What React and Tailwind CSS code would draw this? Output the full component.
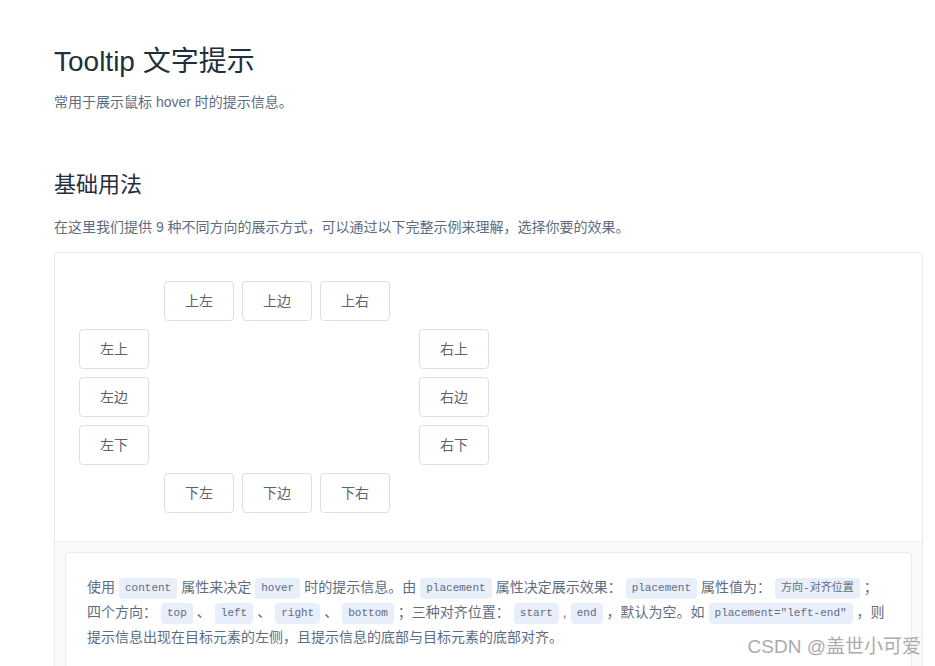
import React from 'react';

const FONT = { fontFamily: '"Liberation Sans", "Noto Sans CJK SC", sans-serif' };

const Btn = ({ children }) => (
  <button className="w-[70px] h-[40px] border border-[#dcdfe6] rounded-[4px] bg-white text-[14px] leading-none text-[#606266]">
    {children}
  </button>
);

const Code = ({ children }) => (
  <code
    className="inline-block mx-[4px] px-[6px] h-[21px] leading-[21px] align-middle rounded-[4px] bg-[#e8eefa] text-[11px] text-[#5e6d82]"
    style={{ fontFamily: '"Liberation Mono", "Noto Sans CJK SC", monospace' }}
  >
    {children}
  </code>
);

const App = () => {
  return (
    <div className="relative min-h-[666px] bg-white pl-[54px] pr-[12px] pt-[42px]" style={FONT}>
      <h2 className="text-[28px] leading-[40px] font-normal text-[#1f2f3d]">Tooltip 文字提示</h2>
      <p className="mt-[10px] text-[14px] leading-[21px] text-[#5e6d82]">常用于展示鼠标 hover 时的提示信息。</p>

      <h3 className="mt-[57px] text-[22px] leading-[30px] font-normal text-[#1f2f3d]">基础用法</h3>
      <p className="mt-[17px] text-[14px] leading-[21px] text-[#5e6d82]">
        在这里我们提供 9 种不同方向的展示方式，可以通过以下完整示例来理解，选择你要的效果。
      </p>

      <div className="mt-[14px] border border-[#ebebeb] rounded-[4px]">
        {/* demo */}
        <div className="pt-[28px] pb-[28px] pl-[24px] flex flex-col gap-[8px]">
          <div className="flex gap-[8px] ml-[85px]">
            <Btn>上左</Btn>
            <Btn>上边</Btn>
            <Btn>上右</Btn>
          </div>
          <div className="flex justify-between w-[410px]">
            <Btn>左上</Btn>
            <Btn>右上</Btn>
          </div>
          <div className="flex justify-between w-[410px]">
            <Btn>左边</Btn>
            <Btn>右边</Btn>
          </div>
          <div className="flex justify-between w-[410px]">
            <Btn>左下</Btn>
            <Btn>右下</Btn>
          </div>
          <div className="flex gap-[8px] ml-[85px]">
            <Btn>下左</Btn>
            <Btn>下边</Btn>
            <Btn>下右</Btn>
          </div>
        </div>

        {/* description */}
        <div className="border-t border-[#eaeefb] bg-[#fafafa] p-[10px] pb-[40px]">
          <div className="bg-white border border-[#ebebeb] rounded-[4px] pl-[21px] pr-[10px] pt-[22px] pb-[24px] text-[14px] leading-[25px] text-[#5e6d82]">
            使用<Code>content</Code>属性来决定<Code>hover</Code>时的提示信息。由<Code>placement</Code>属性决定展示效果：
            <Code>placement</Code>属性值为：<Code>方向-对齐位置</Code>；
            <br />
            四个方向：<Code>top</Code>、<Code>left</Code>、<Code>right</Code>、<Code>bottom</Code>；三种对齐位置：
            <Code>start</Code>,<Code>end</Code>，默认为空。如<Code>placement="left-end"</Code>，则
            <br />
            提示信息出现在目标元素的左侧，且提示信息的底部与目标元素的底部对齐。
          </div>
        </div>
      </div>

      <div
        className="absolute right-[14px] top-[633px] text-[19px] leading-[28px] text-[#ababab]"
        style={{ textShadow: '0 0 2px #fff' }}
      >
        CSDN @盖世小可爱
      </div>
    </div>
  );
};

export default App;
